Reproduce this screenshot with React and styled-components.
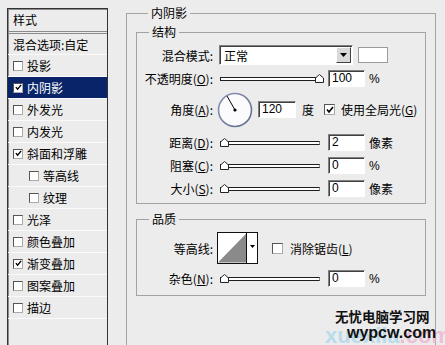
import React from 'react';
import styled, { createGlobalStyle } from 'styled-components';

const GlobalStyle = createGlobalStyle`
  html, body {
    margin: 0;
    padding: 0;
    background: #ececec;
  }
  body {
    font-family: "Noto Sans CJK SC", "Liberation Sans", sans-serif;
    font-size: 12px;
    color: #000;
    overflow: hidden;
  }
`;

const Page = styled.div`
  position: relative;
  display: flex;
  align-items: flex-start;
  width: 445px;
  height: 345px;
  overflow: hidden;
  background: #ececec;
`;

/* ---- left styles list ---- */

const StylesList = styled.div`
  margin: 8px 0 0 7px;
  width: 99px;
  height: 360px;
  border: 1px solid #333;
  border-bottom: none;
  box-shadow: inset 1px 1px 0 #8c8c8c;
  display: flex;
  flex-direction: column;
`;

const ListHeader = styled.div`
  height: 22px;
  line-height: 22px;
  padding-left: 5px;
  border-bottom: 3px double #8a8a8a;
`;

const ListRow = styled.div`
  height: ${p => (p.$tall ? 21 : 20)}px;
  display: flex;
  align-items: center;
  gap: 4px;
  padding-left: ${p => (p.$indent ? 21 : 5)}px;
  border-bottom: 1px solid #fafafa;
  background: ${p => (p.$active ? '#0a246a' : 'transparent')};
  color: ${p => (p.$active ? '#fff' : '#000')};
  white-space: nowrap;
`;

/* ---- right panel ---- */

const Main = styled.div`
  margin: 6px 0 0 18px;
  width: 310px;
`;

const Group = styled.fieldset`
  margin: ${p => p.$mt || 0}px 0 0 0;
  min-width: 0;
  box-sizing: border-box;
  width: ${p => p.$w}px;
  height: ${p => (p.$h ? `${p.$h}px` : 'auto')};
  border: 1px solid #a3a3a3;
  padding: ${p => p.$pad};
`;

const Legend = styled.legend`
  margin-left: 12px;
  padding: 0 3px;
  line-height: 14px;
  font-size: 12px;
`;

const Row = styled.div`
  display: flex;
  align-items: center;
  height: ${p => p.$h}px;
  margin-top: ${p => p.$mt || 0}px;
  white-space: nowrap;
`;

const Label = styled.div`
  width: 76px;
  text-align: right;
  flex-shrink: 0;
  u { text-decoration: underline; }
`;

const Select = styled.div`
  margin-left: 6px;
  width: 134px;
  height: 20px;
  box-sizing: border-box;
  background: #fff;
  border-style: solid;
  border-width: 1px;
  border-color: #808080 #fff #fff #808080;
  box-shadow: inset 1px 1px 0 #404040;
  display: flex;
  align-items: center;
  justify-content: space-between;
  padding: 0 1px 0 4px;
`;

const DropButton = styled.div`
  width: 15px;
  height: 16px;
  box-sizing: border-box;
  background: #d9d9d9;
  border-style: solid;
  border-width: 1px;
  border-color: #fff #404040 #404040 #fff;
  display: flex;
  align-items: center;
  justify-content: center;
`;

const Swatch = styled.div`
  margin-left: 5px;
  width: 30px;
  height: 16px;
  box-sizing: border-box;
  background: #fff;
  border: 1px solid #9a9a9a;
`;

const SliderBox = styled.div`
  position: relative;
  margin-left: ${p => p.$ml ?? 7}px;
  width: 100px;
  height: 12px;
  display: flex;
  align-items: center;
`;

const Track = styled.div`
  width: 98px;
  height: 2px;
  background: #fff;
  border: 1px solid #1e1e1e;
  border-right-color: #888;
`;

const Thumb = styled.svg`
  position: absolute;
  top: 1px;
`;

const NumField = styled.div`
  margin-left: ${p => p.$ml ?? 8}px;
  width: ${p => p.$w || 37}px;
  height: 17px;
  box-sizing: border-box;
  background: #fff;
  border-style: solid;
  border-width: 1px;
  border-color: #808080 #fff #fff #808080;
  box-shadow: inset 1px 1px 0 #404040;
  padding: 0 0 0 3px;
  font-family: "Liberation Sans", sans-serif;
  font-size: 12px;
  line-height: 15px;
`;

const Unit = styled.span`
  margin-left: ${p => p.$ml ?? 4}px;
  font-family: ${p => (p.$latin ? '"Liberation Sans", sans-serif' : 'inherit')};
`;

const Box = styled.span`
  display: inline-flex;
  align-items: center;
  justify-content: center;
  flex-shrink: 0;
  margin-left: ${p => p.$ml || 0}px;
  width: ${p => p.$size}px;
  height: ${p => p.$size}px;
  box-sizing: border-box;
  background: #fff;
  border: 1px solid #555;
  border-right-color: #aaa;
  border-bottom-color: #aaa;
`;

const Dial = styled.svg`
  margin-left: 4px;
  flex-shrink: 0;
`;

const ContourPicker = styled.div`
  margin-left: 4px;
  width: 41px;
  height: 32px;
  box-sizing: border-box;
  border: 1px solid #111;
  background: #fff;
  display: flex;
`;

const ContourArrow = styled.div`
  width: 10px;
  border-left: 1px solid #111;
  display: flex;
  justify-content: center;
  padding-top: 12px;
`;

const Watermark = styled.div`
  position: absolute;
  left: 325px;
  top: 308px;
  width: 118px;
  height: 37px;
  font-family: "Liberation Sans", "Noto Sans CJK SC", sans-serif;
`;

const WmBack = styled.div`
  position: absolute;
  left: 0;
  top: 15px;
  font-size: 22px;
  font-weight: bold;
  color: #a9d6ea;
  opacity: 0.75;
  span { color: #eeb0cc; }
`;

const WmTitle = styled.div`
  position: relative;
  padding-left: 10px;
  font-family: "Noto Sans CJK SC", sans-serif;
  font-weight: bold;
  font-size: 13.5px;
  line-height: 17px;
  color: #111;
`;

const WmDomain = styled.div`
  position: relative;
  padding-left: 22px;
  font-weight: bold;
  font-size: 16px;
  line-height: 16px;
  color: #111;
`;

const Check = ({ size = 10, checked, ml }) => (
  <Box $size={size} $ml={ml}>
    {checked && (
      <svg width={size - 3} height={size - 3} viewBox="0 0 8 8">
        <path d="M1 3.5 L3 6 L7 1" fill="none" stroke="#000" strokeWidth="1.6" />
      </svg>
    )}
  </Box>
);

const Slider = ({ value, ml }) => (
  <SliderBox $ml={ml}>
    <Track />
    <Thumb width="9" height="9" viewBox="0 0 9 9" style={{ left: value * 0.95 }}>
      <polygon points="0.5,8.5 0.5,4 4.5,0.5 8.5,4 8.5,8.5" fill="#fff" stroke="#222" strokeWidth="1" />
    </Thumb>
  </SliderBox>
);

const styles = [
  { name: '投影' },
  { name: '内阴影', checked: true, active: true },
  { name: '外发光' },
  { name: '内发光' },
  { name: '斜面和浮雕', checked: true },
  { name: '等高线', indent: true },
  { name: '纹理', indent: true },
  { name: '光泽' },
  { name: '颜色叠加' },
  { name: '渐变叠加', checked: true },
  { name: '图案叠加' },
  { name: '描边' },
];

export default function App() {
  return (
    <Page>
      <GlobalStyle />
      <StylesList>
        <ListHeader>样式</ListHeader>
        <ListRow>混合选项:自定</ListRow>
        {styles.map(s => (
          <ListRow key={s.name} $tall $indent={s.indent} $active={s.active}>
            <Check size={10} checked={s.checked} />
            <span>{s.name}</span>
          </ListRow>
        ))}
      </StylesList>

      <Main>
        <Group $w={310} $h={400} $pad="5px 10px 0 9px">
          <Legend>内阴影</Legend>

          <Group $w={290} $pad="6px 0 6px 0">
            <Legend>结构</Legend>
            <Row $h={20}>
              <Label>混合模式:</Label>
              <Select>
                <span>正常</span>
                <DropButton>
                  <svg width="7" height="4" viewBox="0 0 7 4"><polygon points="0,0 7,0 3.5,4" fill="#000" /></svg>
                </DropButton>
              </Select>
              <Swatch />
            </Row>
            <Row $h={17} $mt={5}>
              <Label>不透明度(<u>O</u>):</Label>
              <Slider value={100} />
              <NumField>100</NumField>
              <Unit $latin>%</Unit>
            </Row>
            <Row $h={35} $mt={5}>
              <Label>角度(<u>A</u>):</Label>
              <Dial width="36" height="36" viewBox="0 0 36 36">
                <defs>
                  <linearGradient id="ring" x1="0" y1="0" x2="1" y2="1">
                    <stop offset="0" stopColor="#8d98b4" />
                    <stop offset="1" stopColor="#5e6a8a" />
                  </linearGradient>
                </defs>
                <circle cx="18" cy="18" r="16.5" fill="#fbfbfd" stroke="url(#ring)" strokeWidth="1.6" />
                <line x1="18" y1="18" x2="10" y2="4" stroke="#000" strokeWidth="1" />
                <circle cx="18" cy="18" r="1.6" fill="#000" />
              </Dial>
              <NumField $ml={5} $w={38}>120</NumField>
              <Unit $ml={6}>度</Unit>
              <Check size={11} checked ml={10} />
              <Unit $ml={6}>使用全局光(<u>G</u>)</Unit>
            </Row>
            <Row $h={17} $mt={7}>
              <Label>距离(<u>D</u>):</Label>
              <Slider value={0} />
              <NumField>2</NumField>
              <Unit>像素</Unit>
            </Row>
            <Row $h={17} $mt={6}>
              <Label>阻塞(<u>C</u>):</Label>
              <Slider value={0} />
              <NumField>0</NumField>
              <Unit $latin>%</Unit>
            </Row>
            <Row $h={17} $mt={6}>
              <Label>大小(<u>S</u>):</Label>
              <Slider value={0} />
              <NumField>0</NumField>
              <Unit>像素</Unit>
            </Row>
          </Group>

          <Group $w={290} $mt={8} $pad="6px 0 8px 0">
            <Legend>品质</Legend>
            <Row $h={32}>
              <Label>等高线:</Label>
              <ContourPicker>
                <svg width="29" height="30" viewBox="0 0 29 30">
                  <polygon points="0,30 29,0 29,30" fill="#8a8a8a" />
                </svg>
                <ContourArrow>
                  <svg width="5" height="3" viewBox="0 0 5 3"><polygon points="0,0 5,0 2.5,3" fill="#000" /></svg>
                </ContourArrow>
              </ContourPicker>
              <Check size={11} ml={14} />
              <Unit $ml={7}>消除锯齿(<u>L</u>)</Unit>
            </Row>
            <Row $h={17} $mt={6}>
              <Label>杂色(<u>N</u>):</Label>
              <Slider value={0} />
              <NumField>0</NumField>
              <Unit $latin>%</Unit>
            </Row>
          </Group>
        </Group>
      </Main>

      <Watermark>
        <WmBack>xuexila<span>.com</span></WmBack>
        <WmTitle>无忧电脑学习网</WmTitle>
        <WmDomain>wypcw.com</WmDomain>
      </Watermark>
    </Page>
  );
}
